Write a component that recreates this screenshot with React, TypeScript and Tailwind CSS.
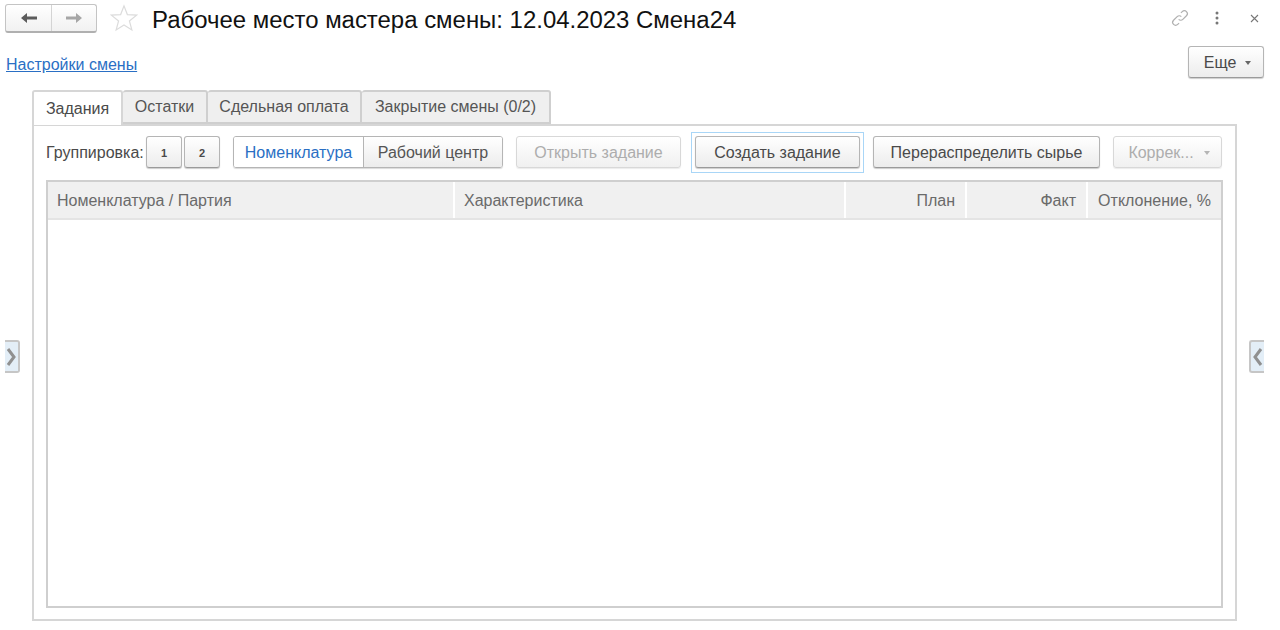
import { FC, ReactNode } from "react";

const btn =
  "flex items-center justify-center h-8 pt-[2px] rounded-[3px] border border-[#b5b5b5] border-b-[#9a9a9a] bg-gradient-to-b from-white to-[#ececec] shadow-[0_1px_1px_rgba(0,0,0,0.2)] text-[16px] text-[#4a4a4a]";
const btnOff =
  "flex items-center justify-center h-8 pt-[2px] rounded-[3px] border border-[#d8d8d8] bg-gradient-to-b from-white to-[#f0f0f0] shadow-[0_1px_1px_rgba(0,0,0,0.08)] text-[16px] text-[#adadad]";

const Tab: FC<{ w: string; active?: boolean; children: ReactNode }> = ({ w, active, children }) => (
  <div
    className={
      active
        ? `${w} h-[35px] -mb-px z-10 flex items-center justify-center rounded-t-[3px] border-2 border-b-0 border-[#d6d6d6] bg-white text-[16px] text-[#4a4a4a]`
        : `${w} h-[34px] flex items-center justify-center rounded-t-[3px] border-2 border-l-0 border-[#cfcfcf] bg-[#efefef] text-[16px] text-[#555]`
    }
  >
    {children}
  </div>
);

const Th: FC<{ w: string; right?: boolean; children: ReactNode }> = ({ w, right, children }) => (
  <div
    className={`${w} flex items-center pt-[2px] pl-[9px] pr-[10px] border-r-2 border-white last:border-r-0 text-[16px] text-[#6a6a6a] whitespace-nowrap ${
      right ? "justify-end" : ""
    }`}
  >
    {children}
  </div>
);

const Handle: FC<{ left?: boolean }> = ({ left }) => (
  <div
    className={`w-[15px] h-[33px] flex items-center justify-center bg-[#e3eef7] border-2 border-[#c6c6c6] ${
      left ? "border-l-0 rounded-r-[3px]" : "border-r-0 rounded-l-[3px]"
    }`}
  >
    <svg width="11" height="22" viewBox="0 0 11 22" fill="none" stroke="#909090" strokeWidth="3">
      <path d={left ? "M2 3l6 8-6 8" : "M9 3l-6 8 6 8"} />
    </svg>
  </div>
);

export default function App() {
  return (
    <div className="w-[1280px] h-[630px] overflow-hidden bg-white flex flex-col font-['Liberation_Sans',Arial,sans-serif]">
      <header className="h-[37px] pt-[4px] pl-[5px] pr-[21px] flex items-start shrink-0">
        <div className="w-[92px] h-[29px] flex rounded-[3px] border border-[#c4c4c4] border-b-2 border-b-[#b0b0b0] bg-gradient-to-b from-white to-[#f1f1f1]">
          <div className="w-[46px] flex items-center justify-center border-r border-[#d4d4d4]">
            <svg width="18" height="14" viewBox="0 0 18 14" fill="#5c5c5c">
              <path d="M1 7l6-5v3.500h10v3H7V12z" />
            </svg>
          </div>
          <div className="flex-1 flex items-center justify-center">
            <svg width="18" height="14" viewBox="0 0 18 14" fill="#a6a6a6">
              <path d="M17 7l-6-5v3.500H1v3h10V12z" />
            </svg>
          </div>
        </div>
        <svg className="ml-[13px]" width="28" height="28" viewBox="0 0 30 30" fill="none" stroke="#dcdcdc" strokeWidth="1.3">
          <path d="M15 2l3.600 9.300 9.900.6-7.700 6.300 2.600 9.600-8.400-5.400-8.400 5.400 2.600-9.600L1.500 11.900l9.900-.6z" />
        </svg>
        <h1 className="ml-[14px] text-[23.95px] leading-[32px] font-normal text-[#111] whitespace-nowrap">
          Рабочее место мастера смены: 12.04.2023 Смена24
        </h1>
        <div className="ml-auto flex items-center h-[26px] mt-[1px]">
          <svg width="20" height="20" viewBox="0 0 22 22" fill="none" stroke="#b0b0b0" strokeWidth="1.300">
            <path d="M9.500 12.500a3.200 3.200 0 0 0 4.600 0l4-4a3.200 3.200 0 0 0-4.600-4.600l-1.500 1.500" />
            <path d="M12.500 9.500a3.200 3.200 0 0 0-4.600 0l-4 4a3.200 3.200 0 0 0 4.600 4.600l1.500-1.500" />
          </svg>
          <svg className="ml-[25px]" width="4" height="14" viewBox="0 0 4 14" fill="#777">
            <circle cx="2" cy="2" r="1.500" />
            <circle cx="2" cy="7" r="1.500" />
            <circle cx="2" cy="12" r="1.500" />
          </svg>
          <svg className="ml-[31px]" width="9" height="9" viewBox="0 0 9 9" fill="none" stroke="#777" strokeWidth="1.100">
            <path d="M1 1l7 7M8 1l-7 7" />
          </svg>
        </div>
      </header>

      <div className="h-[53px] pl-[6px] pr-[16px] pt-[9px] flex items-start justify-between shrink-0">
        <a className="mt-[10px] text-[16px] leading-[18px] text-[#2a6fc4] underline">Настройки смены</a>
        <div className={`${btn} w-[76px] gap-[9px] pl-[3px]`}>
          <span>Еще</span>
          <span className="w-0 h-0 border-x-[3.5px] border-x-transparent border-t-[4px] border-t-[#666]" />
        </div>
      </div>

      <div className="flex flex-1 min-h-0">
        <div className="w-[32px] pl-[5px] pt-[250px] flex items-start shrink-0">
          <Handle left />
        </div>

        <main className="w-[1205px] flex flex-col">
          <div className="flex">
            <Tab w="w-[91px]" active>Задания</Tab>
            <Tab w="w-[85px]">Остатки</Tab>
            <Tab w="w-[154px]">Сдельная оплата</Tab>
            <Tab w="w-[189px]">Закрытие смены (0/2)</Tab>
          </div>

          <section className="h-[497px] border-2 border-[#d6d6d6] pt-[9px] px-[12px] flex flex-col">
            <div className="h-[34px] flex items-center text-[16px] text-[#4a4a4a]">
              <span className="w-[100px] pt-[2px] whitespace-nowrap">Группировка:</span>
              <div className={`${btn} w-[36px] !text-[11px] font-bold`}>1</div>
              <div className={`${btn} w-[36px] ml-[2px] !text-[11px] font-bold`}>2</div>
              <div className="ml-[13px] w-[270px] h-8 flex rounded-[3px] border border-[#b5b5b5] shadow-[0_1px_1px_rgba(0,0,0,0.15)] overflow-hidden">
                <div className="w-[130px] pt-[2px] flex items-center justify-center border-r border-[#b5b5b5] bg-white text-[#2a6fc4]">Номенклатура</div>
                <div className="flex-1 pt-[2px] flex items-center justify-center bg-gradient-to-b from-white to-[#ececec] text-[#555]">Рабочий центр</div>
              </div>
              <div className={`${btnOff} ml-[13px] w-[165px]`}>Открыть задание</div>
              <div className="ml-[10px] w-[173px] h-[41px] flex items-center justify-center border border-[#a9d6f7]">
                <div className={`${btn} w-[165px]`}>Создать задание</div>
              </div>
              <div className={`${btn} ml-[9px] w-[227px]`}>Перераспределить сырье</div>
              <div className={`${btnOff} ml-[13px] w-[109px] gap-[10px] pl-[3px]`}>
                <span>Коррек...</span>
                <span className="w-0 h-0 border-x-[3px] border-x-transparent border-t-[4px] border-t-[#b5b5b5]" />
              </div>
            </div>

            <div className="mt-[11px] h-[428px] border-2 border-[#cfcfcf] bg-white">
              <div className="h-[38px] flex bg-[#f0f0f0] border-b-2 border-[#e4e4e4]">
                <Th w="w-[407px]">Номенклатура / Партия</Th>
                <Th w="w-[391px]">Характеристика</Th>
                <Th w="w-[121px]" right>План</Th>
                <Th w="w-[121px]" right>Факт</Th>
                <Th w="flex-1" right>Отклонение, %</Th>
              </div>
            </div>
          </section>
        </main>

        <div className="flex-1 pl-[12px] pt-[250px] flex items-start">
          <Handle />
        </div>
      </div>
    </div>
  );
}
